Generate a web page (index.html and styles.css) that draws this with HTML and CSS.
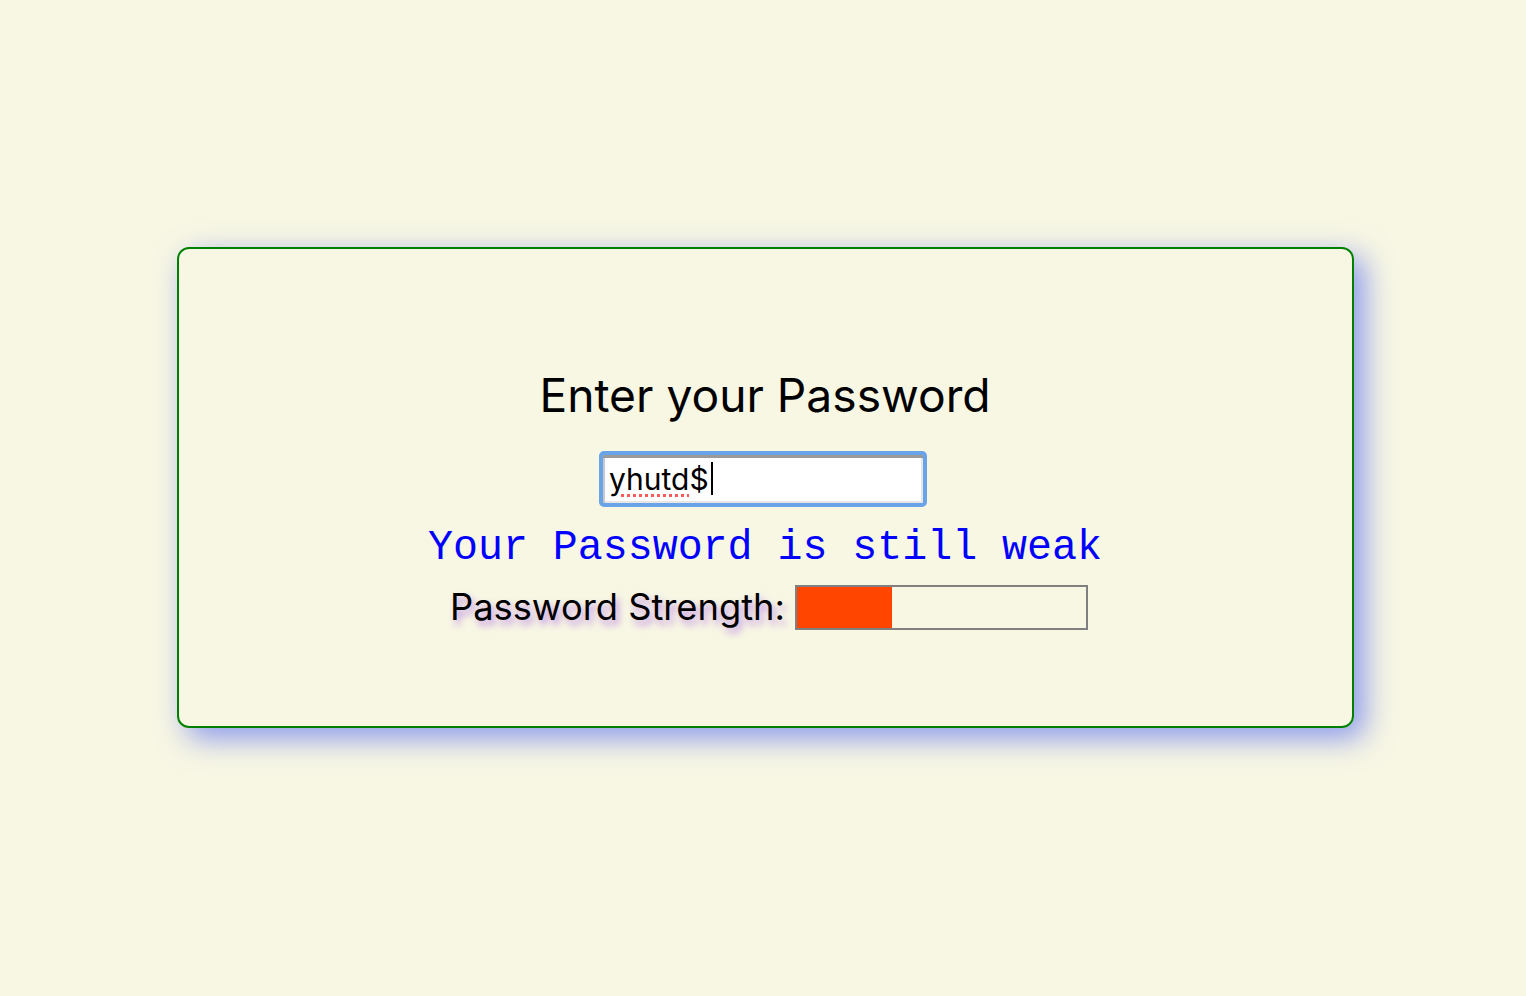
FILE: index.html
```html
<!DOCTYPE html>
<html lang="en">
<head>
<meta charset="utf-8">
<title>Password Strength</title>
<link rel="stylesheet" href="styles.css">
</head>
<body>
<main class="card">
  <h1 class="title">Enter your Password</h1>
  <div class="field"><span class="field-text"><span class="misspelled">yhutd</span>$</span><span class="caret"></span></div>
  <p class="message">Your Password is still weak</p>
  <div class="strength">
    <span class="strength-label">Password Strength:</span>
    <div class="meter"><div class="meter-fill" style="width:33%"></div></div>
  </div>
</main>
</body>
</html>
```
FILE: styles.css
```css
html, body {
  margin: 0;
  padding: 0;
}
body {
  background: #f8f7e4;
  height: 996px;
  display: flex;
  align-items: center;
  justify-content: center;
  font-family: Inter, "Liberation Sans", sans-serif;
}
.card {
  box-sizing: border-box;
  width: 1177px;
  height: 481px;
  margin: 0 0 22px 4px;
  border: 2px solid #008000;
  border-radius: 12px;
  box-shadow: 10px 10px 30px rgba(100, 120, 240, 0.75);
  display: flex;
  flex-direction: column;
  align-items: center;
  padding-top: 118px;
}
.title {
  margin: 0;
  font-size: 46.2px;
  font-weight: 400;
  line-height: 56px;
  color: #000;
}
.field {
  margin-top: 28px;
  box-sizing: border-box;
  width: 328px;
  height: 56px;
  margin-left: -4px;
  border: 4px solid #6aa4e8;
  border-radius: 5px;
  background: #fff;
  box-shadow: inset 0 3px 0 #9a9a9a, inset 2px 0 0 #c8c8c8, inset -2px 0 0 #e6e6e6, inset 0 -2px 0 #e6e6e6;
  display: flex;
  align-items: center;
  padding-left: 6px;
  font-size: 30px;
  color: #000;
}
.misspelled {
  text-decoration: underline dotted #ff5a5a;
  text-decoration-thickness: 3px;
  text-underline-offset: 4px;
}
.caret {
  display: inline-block;
  width: 2px;
  height: 33px;
  background: #000;
  margin-left: 2px;
}
.message {
  margin: 19px 0 0;
  font-family: "Liberation Mono", "Courier New", monospace;
  font-size: 41.6px;
  line-height: 44px;
  color: #0000ff;
}
.strength {
  margin-top: 15px;
  display: flex;
  align-items: center;
  gap: 10px;
  padding-left: 8px;
}
.strength-label {
  font-size: 36.3px;
  color: #000;
  text-shadow: 3px 5px 7px rgba(170, 100, 230, 0.7);
}
.meter {
  box-sizing: border-box;
  width: 293px;
  height: 45px;
  border: 2px solid #808080;
  display: flex;
  padding: 0;
}
.meter-fill {
  background: #ff4500;
  height: 100%;
}
```
